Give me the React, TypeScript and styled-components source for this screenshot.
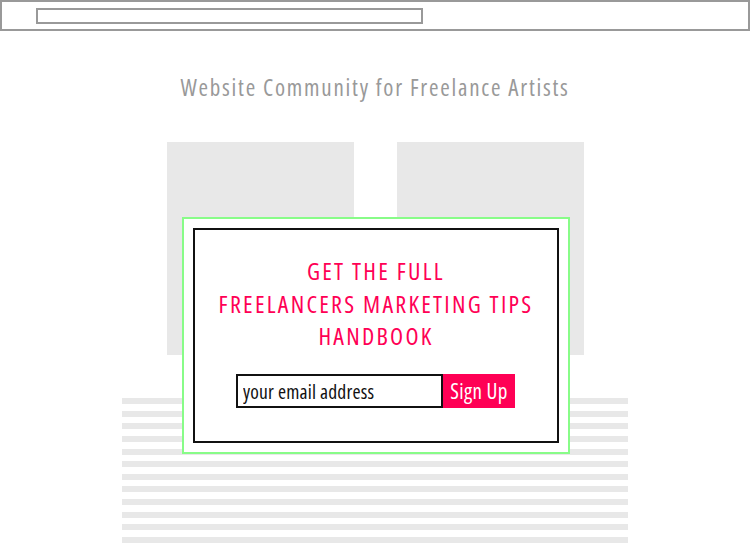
import React from "react";
import styled, { createGlobalStyle } from "styled-components";

const GlobalStyle = createGlobalStyle`
  html, body { margin: 0; padding: 0; background: #ffffff; }
  body { font-family: "Open Sans", "Noto Sans", sans-serif; }
  * { box-sizing: border-box; }
`;

const Page = styled.div`
  width: 750px;
  height: 550px;
  overflow: hidden;
  background: #ffffff;
`;

const BrowserBar = styled.header`
  height: 31px;
  border: 2px solid #999999;
  padding: 6px 0 0 34px;
`;

const AddressField = styled.div`
  width: 387px;
  height: 16px;
  border: 2px solid #999999;
`;

const SiteTitle = styled.h1`
  margin: 41px 0 0;
  font-family: "Open Sans", sans-serif;
  font-stretch: condensed;
  font-weight: 500;
  font-size: 23px;
  line-height: 30px;
  letter-spacing: 1.76px;
  color: #999999;
  text-align: center;
`;

const Content = styled.main`
  position: relative;
  margin-top: 40px;
`;

const BlockRow = styled.div`
  display: flex;
  justify-content: center;
  gap: 43px;
  padding-left: 1px;
`;

const ImageBlock = styled.div`
  width: 187px;
  height: 213px;
  background: #e8e8e8;
`;

const TextLines = styled.div`
  width: 506px;
  margin: 43px auto 0;
  display: flex;
  flex-direction: column;
  gap: 6.64px;
`;

const TextLine = styled.div`
  height: 6px;
  background: #e8e8e8;
`;

const Popup = styled.section`
  position: absolute;
  top: 75px;
  left: 182px;
  width: 388px;
  height: 237px;
  border: 2px solid #88fc88;
  background: #ffffff;
  padding: 9px;
`;

const PopupInner = styled.div`
  height: 100%;
  border: 2px solid #111111;
  padding-top: 25px;
  display: flex;
  flex-direction: column;
  align-items: center;
`;

const Headline = styled.h2`
  margin: 0;
  font-family: "Open Sans", sans-serif;
  font-stretch: condensed;
  font-weight: 500;
  font-size: 24px;
  line-height: 32.5px;
  letter-spacing: 2.25px;
  color: #ff0055;
  text-align: center;
  text-transform: uppercase;
`;

const SignupForm = styled.form`
  display: flex;
  margin-top: 21px;
  height: 34px;
  padding-right: 1px;
`;

const EmailInput = styled.input`
  width: 207px;
  height: 34px;
  border: 2px solid #111111;
  padding: 2px 0 0 5px;
  font-family: "Open Sans", sans-serif;
  font-stretch: condensed;
  font-weight: 500;
  font-size: 19.5px;
  letter-spacing: 0.2px;
  color: #111111;
  outline: none;
  &::placeholder {
    color: #111111;
    opacity: 1;
  }
`;

const SignupButton = styled.button`
  width: 72px;
  height: 34px;
  border: none;
  background: #ff0055;
  color: #ffffff;
  font-family: "Open Sans", sans-serif;
  font-stretch: condensed;
  font-weight: 500;
  font-size: 21px;
  letter-spacing: 0.4px;
  padding: 1px 0 0;
  cursor: pointer;
`;

export default function App() {
  const lines = Array.from({ length: 12 });
  return (
    <Page>
      <GlobalStyle />
      <BrowserBar>
        <AddressField />
      </BrowserBar>
      <SiteTitle>Website Community for Freelance Artists</SiteTitle>
      <Content>
        <BlockRow>
          <ImageBlock />
          <ImageBlock />
        </BlockRow>
        <TextLines>
          {lines.map((_, i) => (
            <TextLine key={i} />
          ))}
        </TextLines>
        <Popup>
          <PopupInner>
            <Headline>
              Get the full
              <br />
              Freelancers marketing tips
              <br />
              handbook
            </Headline>
            <SignupForm onSubmit={(e) => e.preventDefault()}>
              <EmailInput type="email" placeholder="your email address" />
              <SignupButton type="submit">Sign Up</SignupButton>
            </SignupForm>
          </PopupInner>
        </Popup>
      </Content>
    </Page>
  );
}
